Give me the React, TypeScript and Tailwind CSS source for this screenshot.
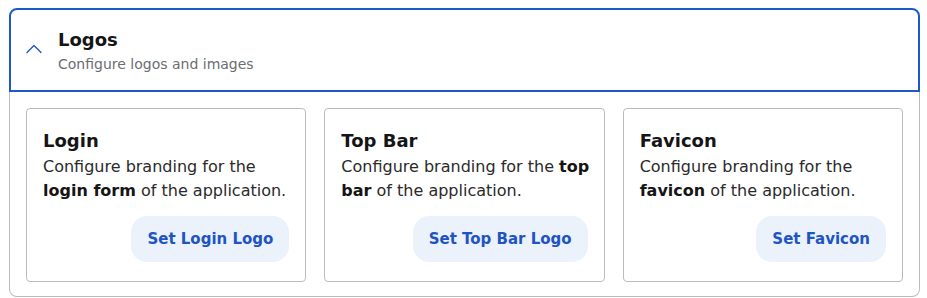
import { ChevronUp } from "lucide-react"

interface BrandCardProps {
  title: string
  lineOne: React.ReactNode
  lineTwo: React.ReactNode
  action: string
}

function BrandCard({ title, lineOne, lineTwo, action }: BrandCardProps) {
  return (
    <div className="flex flex-col rounded border border-[#b9bcbf] px-[16px] pt-[19px] pb-[19px]">
      <h3 className="text-[18px] font-bold leading-[26px] text-[#151515]">{title}</h3>
      <p className="mt-[1px] whitespace-nowrap text-[16px] leading-[24px] text-[#2a2a2a]">
        {lineOne}
        <br />
        {lineTwo}
      </p>
      <div className="mt-[13px] flex justify-end pr-[-2px]">
        <button className="h-[46px] rounded-[16px] bg-[#ecf2fc] px-[16px] text-[15px] font-bold text-[#1e54c4]">
          {action}
        </button>
      </div>
    </div>
  )
}

export default function App() {
  return (
    <div className="bg-white px-[9px] pt-[8px] font-['DejaVu_Sans',sans-serif]">
      <div className="w-[911px]">
        {/* Header */}
        <div className="flex items-center rounded-t-[8px] border-2 border-[#1d59c9] pt-[17px] pb-[17px]">
          <ChevronUp className="ml-[9px] mr-[10px] -mt-[2px] h-[28px] w-[28px] text-[#1d59c9]" strokeWidth={1.2} />
          <div>
            <h2 className="text-[18px] font-bold leading-[26px] text-[#151515]">Logos</h2>
            <p className="mt-[2px] text-[14px] leading-[18px] text-[#6a6e73]">Configure logos and images</p>
          </div>
        </div>

        {/* Body */}
        <div className="grid grid-cols-3 gap-[18px] rounded-b-[8px] border-x border-b border-[#b9bcbf] px-[16px] pt-[16px] pb-[14px]">
          <BrandCard
            title="Login"
            lineOne="Configure branding for the"
            lineTwo={
              <>
                <b className="font-bold text-[#151515]">login form</b> of the application.
              </>
            }
            action="Set Login Logo"
          />
          <BrandCard
            title="Top Bar"
            lineOne={
              <>
                Configure branding for the <b className="font-bold text-[#151515]">top</b>
              </>
            }
            lineTwo={
              <>
                <b className="font-bold text-[#151515]">bar</b> of the application.
              </>
            }
            action="Set Top Bar Logo"
          />
          <BrandCard
            title="Favicon"
            lineOne="Configure branding for the"
            lineTwo={
              <>
                <b className="font-bold text-[#151515]">favicon</b> of the application.
              </>
            }
            action="Set Favicon"
          />
        </div>
      </div>
    </div>
  )
}
